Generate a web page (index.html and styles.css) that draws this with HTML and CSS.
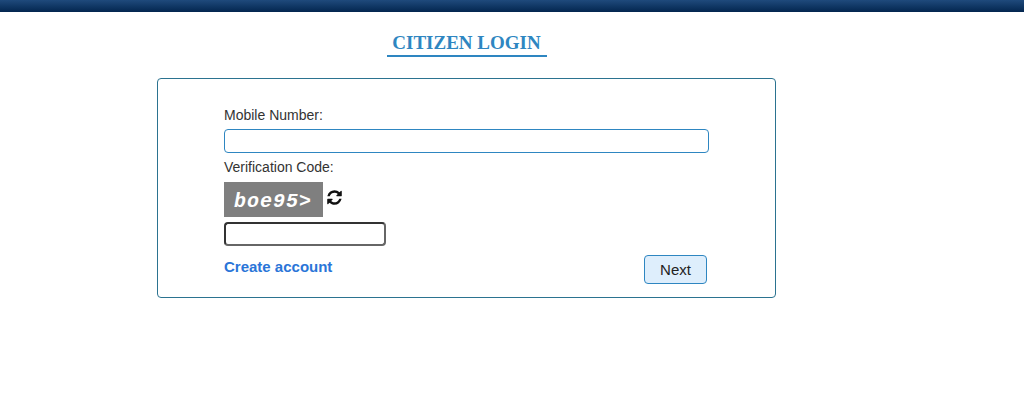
FILE: index.html
```html
<!DOCTYPE html>
<html lang="en">
<head>
    <meta charset="UTF-8">
    <meta name="viewport" content="width=device-width, initial-scale=1.0">
    <title>Citizen Login</title>
    <link rel="stylesheet" href="styles.css">
</head>
<body>
    <div class="top-bar"></div>
    <div class="login-wrap">
        <h1 class="login-title"><span>CITIZEN LOGIN</span></h1>
        <form class="login-box">
            <label class="field-label" for="mobile">Mobile Number:</label>
            <input class="mobile-input" type="text" id="mobile">
            <label class="field-label code-label" for="code">Verification Code:</label>
            <div class="captcha-row">
                <div class="captcha">boe95&gt;</div>
                <svg class="refresh-icon" viewBox="0 0 1536 1792" aria-hidden="true">
                    <path d="M1511 1056q0 5-1 7-64 268-268 434.5t-478 166.5q-146 0-282.5-55t-243.5-157l-129 129q-19 19-45 19t-45-19-19-45v-448q0-26 19-45t45-19h448q26 0 45 19t19 45-19 45l-137 137q71 66 161 102t187 36q134 0 250-65t186-179q11-17 53-117 8-23 30-23h192q13 0 22.5 9.5t9.5 22.5zm25-800v448q0 26-19 45t-45 19h-448q-26 0-45-19t-19-45 19-45l138-138q-148-137-349-137-134 0-250 65t-186 179q-11 17-53 117-8 23-30 23h-199q-13 0-22.5-9.5t-9.5-22.5v-7q65-268 270-434.5t480-166.5q146 0 284 55.5t245 156.5l130-129q19-19 45-19t45 19 19 45z"/>
                </svg>
            </div>
            <input class="code-input" type="text" id="code">
            <div class="form-footer">
                <a class="create-link" href="#">Create account</a>
                <button class="next-btn" type="button">Next</button>
            </div>
        </form>
    </div>
</body>
</html>
```

FILE: styles.css
```css
* {
    box-sizing: border-box;
}
body {
    margin: 0;
    background-color: #ffffff;
    font-family: "Liberation Sans", Arial, sans-serif;
    font-size: 14px;
    color: #333;
}
.top-bar {
    height: 12px;
    background: linear-gradient(to bottom, #1f4a7c, #03264f);
}
.login-wrap {
    width: 619px;
    margin-left: 157px;
}
.login-title {
    margin: 21px 0 21px;
    height: 24px;
    text-align: center;
    font-family: "Liberation Serif", "Times New Roman", serif;
    font-size: 19px;
    line-height: 19px;
    font-weight: bold;
    color: #2e86c1;
}
.login-title span {
    display: inline-block;
    width: 160px;
    height: 24px;
    border-bottom: 2px solid #2e86c1;
}
.login-box {
    height: 220px;
    padding: 28px 66px 0;
    border: 1px solid #2b7390;
    border-radius: 4px;
}
.field-label {
    display: block;
    line-height: 16px;
    color: #333;
}
.mobile-input {
    display: block;
    width: 485px;
    height: 24px;
    margin-top: 6px;
    border: 1px solid #2e86c1;
    border-radius: 4px;
    outline: none;
}
.code-label {
    margin-top: 6px;
}
.captcha-row {
    display: flex;
    align-items: flex-start;
    gap: 4px;
    margin-top: 7px;
}
.captcha {
    width: 99px;
    height: 35px;
    padding-left: 10px;
    background-color: #7f7f7f;
    color: #ffffff;
    font-family: "Liberation Mono", "Courier New", monospace;
    font-size: 20px;
    font-weight: bold;
    font-style: italic;
    line-height: 39px;
    letter-spacing: 1px;
}
.refresh-icon {
    width: 15px;
    height: 17px;
    margin-top: 7px;
    fill: #111;
}
.code-input {
    display: block;
    width: 162px;
    height: 24px;
    margin-top: 5px;
    border: 2px solid #333;
    border-right-color: #666;
    border-bottom-color: #666;
    border-radius: 4px;
    outline: none;
}
.form-footer {
    display: flex;
    justify-content: space-between;
    align-items: flex-start;
    width: 483px;
    margin-top: 9px;
}
.create-link {
    margin-top: 4px;
    font-size: 15px;
    font-weight: bold;
    line-height: 16px;
    color: #2a75d8;
    text-decoration: none;
}
.next-btn {
    width: 63px;
    height: 29px;
    padding: 0;
    background-color: #deeefc;
    border: 1px solid #2e86c1;
    border-radius: 4px;
    font-family: "Liberation Sans", Arial, sans-serif;
    font-size: 15px;
    color: #222;
    cursor: pointer;
}
```
